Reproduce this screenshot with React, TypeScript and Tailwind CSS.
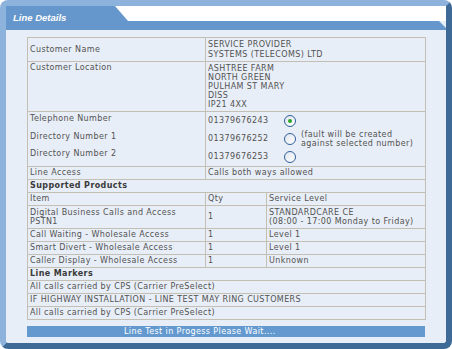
import React from "react";

const txt = "font-['DejaVu_Sans',Verdana,sans-serif] text-[8px] leading-[8px] tracking-[0.4px] text-[#525252]";
const td = "border border-[#c3bfb2] px-[2px] pt-[2px] pb-[2px] align-top";

function Radio({ checked }: { checked?: boolean }) {
  return (
    <span className="w-[12px] h-[12px] rounded-full border border-[#2f5f99] bg-gradient-to-br from-[#dfe6ee] to-white flex items-center justify-center shrink-0">
      {checked && <span className="w-[4px] h-[4px] rounded-full bg-[#2aa52a]" />}
    </span>
  );
}

const products = [
  { item: "Call Waiting - Wholesale Access", qty: "1", level: "Level 1" },
  { item: "Smart Divert - Wholesale Access", qty: "1", level: "Level 1" },
  { item: "Caller Display - Wholesale Access", qty: "1", level: "Unknown" },
];

const markers = [
  "All calls carried by CPS (Carrier PreSelect)",
  "IF HIGHWAY INSTALLATION - LINE TEST MAY RING CUSTOMERS",
  "All calls carried by CPS (Carrier PreSelect)",
];

const numbers = ["01379676243", "01379676252", "01379676253"];

export default function App() {
  return (
    <div className="w-[452px] h-[349px] bg-white">
      <div className="w-[452px] h-[349px] rounded-[8px] border-t-[6px] border-l-[6px] border-r-[6px] border-b-[6px] border-t-[#8db2dc] border-l-[#8db2dc] border-r-[#3e6a97] border-b-[#3e6a97] bg-[#e8eef7] flex flex-col">
        {/* header tab */}
        <div className="relative h-[24px] shrink-0">
          <svg className="absolute inset-0" width="440" height="24" viewBox="0 0 440 24">
            <rect x="0" y="0" width="440" height="15" fill="#ffffff" />
            <polygon points="0,0 109,0 122,15 433,15 440,22 440,24 0,24" fill="#6597cc" />
          </svg>
          <span className="relative block pl-[7px] pt-[7px] font-['Liberation_Sans',Arial,sans-serif] font-bold italic text-[9.5px] leading-[10px] text-white">
            Line Details
          </span>
        </div>

        <div className="px-[21px] pt-[7px]">
          <table className={`w-[398px] table-fixed border-collapse ${txt}`}>
            <colgroup>
              <col className="w-[178px]" />
              <col className="w-[61px]" />
              <col className="w-[159px]" />
            </colgroup>
            <tbody>
              <tr>
                <td className={`${td} !align-middle`}>Customer Name</td>
                <td className={`${td} leading-[9.5px]`} colSpan={2}>
                  SERVICE PROVIDER<br />SYSTEMS (TELECOMS) LTD
                </td>
              </tr>
              <tr>
                <td className={td}>Customer Location</td>
                <td className={`${td} leading-[9px]`} colSpan={2}>
                  ASHTREE FARM<br />NORTH GREEN<br />PULHAM ST MARY<br />DISS<br />IP21 4XX
                </td>
              </tr>
              <tr>
                <td className={`${td} !pt-[3px] !pb-0`}>
                  <div className="h-[17.5px]">Telephone Number</div>
                  <div className="h-[17.5px]">Directory Number 1</div>
                  <div>Directory Number 2</div>
                </td>
                <td className={`${td} !pt-0 !pb-0`} colSpan={2}>
                  {numbers.map((n, i) => (
                    <div key={n} className="h-[18px] flex items-center">
                      <span className="w-[76px]">{n}</span>
                      <Radio checked={i === 0} />
                      {i === 1 && (
                        <span className="ml-[5px] leading-[9px]">
                          (fault will be created<br />against selected number)
                        </span>
                      )}
                    </div>
                  ))}
                </td>
              </tr>
              <tr>
                <td className={td}>Line Access</td>
                <td className={td} colSpan={2}>Calls both ways allowed</td>
              </tr>
              <tr>
                <td className={`${td} font-bold text-[#3a3a3a]`} colSpan={3}>Supported Products</td>
              </tr>
              <tr>
                <td className={td}>Item</td>
                <td className={td}>Qty</td>
                <td className={td}>Service Level</td>
              </tr>
              <tr>
                <td className={`${td} leading-[9px]`}>Digital Business Calls and Access<br />PSTN1</td>
                <td className={`${td} !align-middle`}>1</td>
                <td className={`${td} leading-[9px]`}>STANDARDCARE CE<br />(08:00 - 17:00 Monday to Friday)</td>
              </tr>
              {products.map((p) => (
                <tr key={p.item}>
                  <td className={td}>{p.item}</td>
                  <td className={td}>{p.qty}</td>
                  <td className={td}>{p.level}</td>
                </tr>
              ))}
              <tr>
                <td className={`${td} font-bold text-[#3a3a3a]`} colSpan={3}>Line Markers</td>
              </tr>
              {markers.map((m, i) => (
                <tr key={i}>
                  <td className={td} colSpan={3}>{m}</td>
                </tr>
              ))}
            </tbody>
          </table>

          <div className={`mt-[6px] h-[11px] bg-[#6399cf] pl-[97px] flex items-center ${txt} !text-white`}>
            Line Test in Progess Please Wait....
          </div>
        </div>
      </div>
    </div>
  );
}
